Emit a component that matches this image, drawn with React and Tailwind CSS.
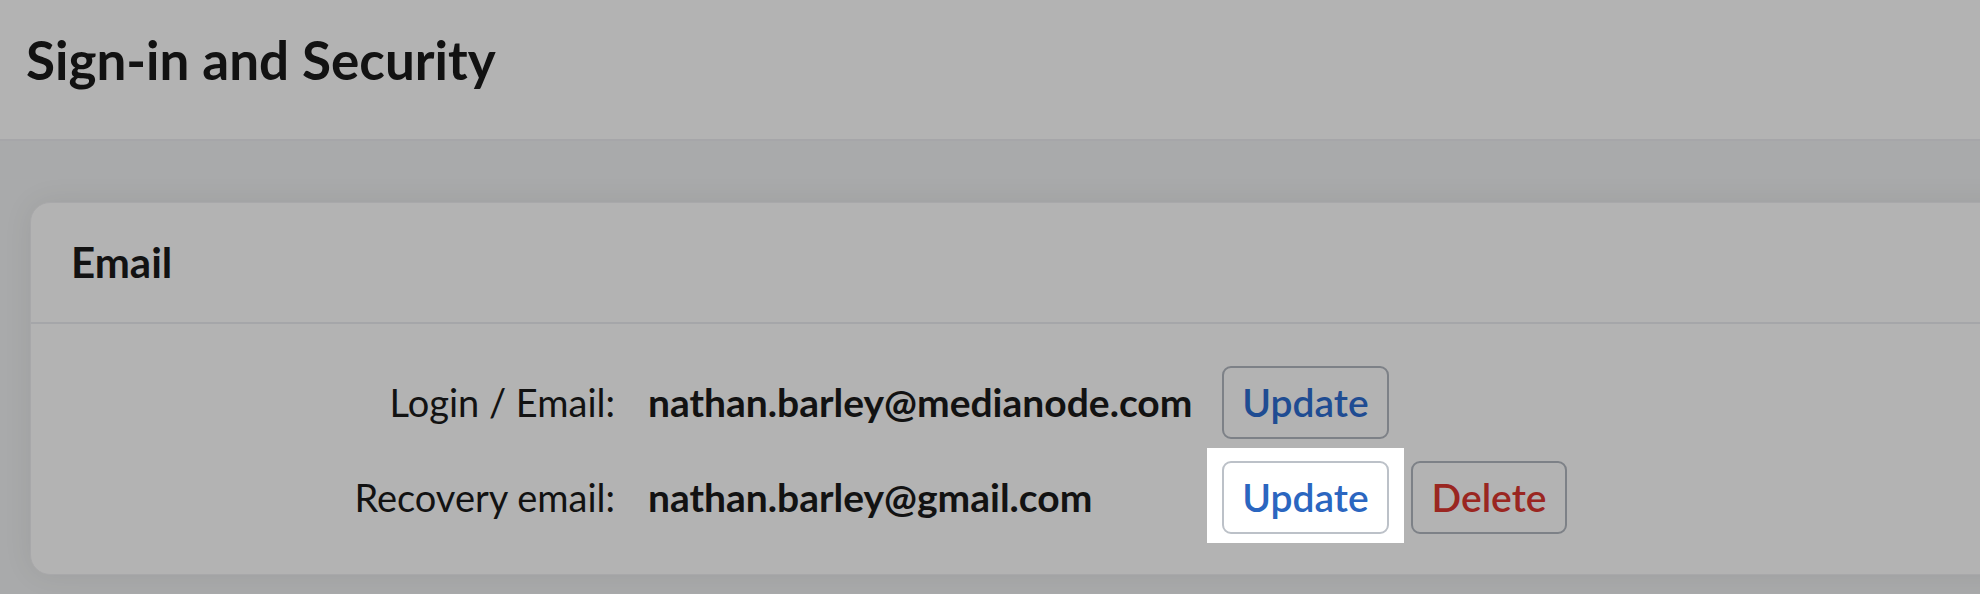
const rows = [
  { label: "Login / Email:", value: "nathan.barley@medianode.com", highlight: false, remove: false },
  { label: "Recovery email:", value: "nathan.barley@gmail.com", highlight: true, remove: true },
];

const UpdateButton = ({ highlight }) => {
  if (highlight) {
    return (
      <div className="-mx-[15px] -mt-[13px] -mb-[9px] bg-white px-[15px] pt-[13px] pb-[9px]">
        <button className="h-[73px] w-[167px] rounded-[9px] border-2 border-[#bcc1c8] bg-white text-[39px] font-semibold text-[#2b66c0]">
          Update
        </button>
      </div>
    );
  }
  return (
    <button className="h-[73px] w-[167px] rounded-[9px] border-2 border-[#7d8187] text-[39px] font-semibold text-[#1f4c92]">
      Update
    </button>
  );
};

const App = () => {
  return (
    <div className="h-[594px] overflow-hidden bg-[#a9aaab] font-['Lato',sans-serif] text-[#121212]">
      <header className="h-[141px] border-b-2 border-[#a6a6a9] bg-[#b3b3b3] pl-[26px] pt-[33px]">
        <h1 className="text-[53px] font-bold leading-none">Sign-in and Security</h1>
      </header>

      <div className="pl-[30px] pt-[61px]">
        <section className="w-[2000px] rounded-[20px] border border-[#a8a8aa] bg-[#b3b3b3] shadow-[0_0_30px_rgba(0,0,0,0.07)]">
          <div className="flex h-[121px] items-center border-b-2 border-[#a5a6a9] pl-[40px]">
            <h2 className="text-[42px] font-bold">Email</h2>
          </div>

          <div className="grid grid-cols-[544px_541px_auto] items-center gap-x-[33px] gap-y-[22px] pb-[40px] pl-[40px] pt-[42px]">
            {rows.map((row) => (
              <div key={row.label} className="contents">
                <div className="text-right text-[38px]">{row.label}</div>
                <div className="text-[39px] font-bold">{row.value}</div>
                <div className="flex items-start gap-[22px]">
                  <UpdateButton highlight={row.highlight} />
                  {row.remove && (
                    <button className="h-[73px] w-[156px] rounded-[9px] border-2 border-[#7d8187] text-[39px] font-semibold text-[#9a2621]">
                      Delete
                    </button>
                  )}
                </div>
              </div>
            ))}
          </div>
        </section>
      </div>
    </div>
  );
};

export default App;
